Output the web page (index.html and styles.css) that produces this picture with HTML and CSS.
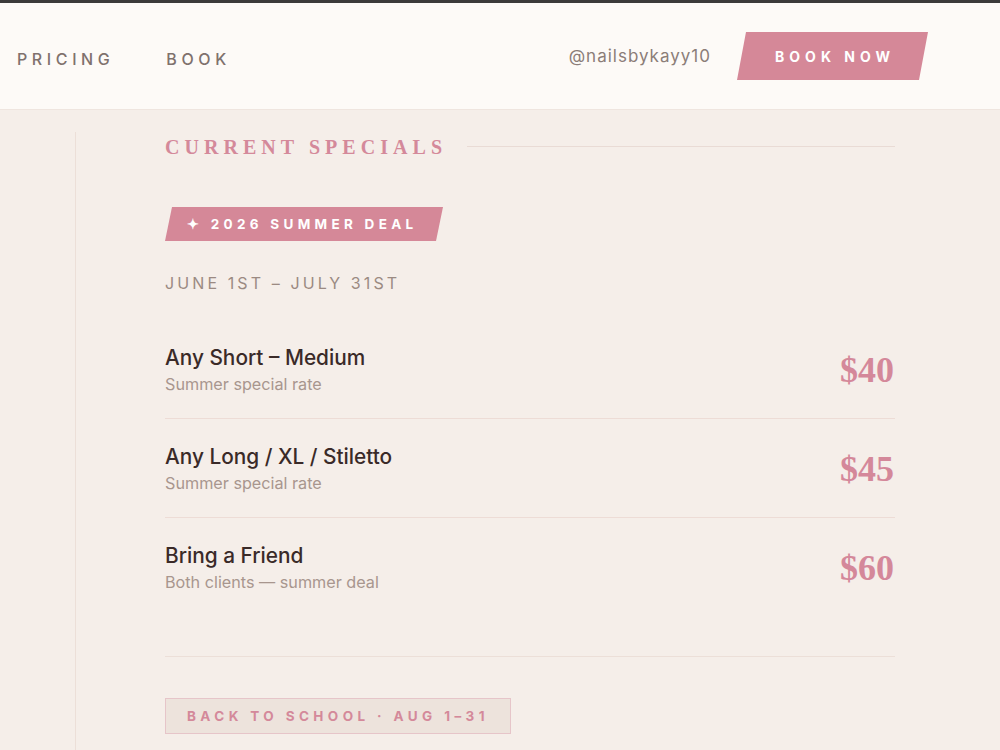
FILE: index.html
```html
<!DOCTYPE html>
<html lang="en">
<head>
<meta charset="utf-8">
<title>Nails by Kayy — Specials</title>
<link rel="stylesheet" href="styles.css">
</head>
<body>
<div class="topbar"></div>
<header class="site-header">
  <nav class="nav">
    <a class="nav-link" href="#pricing">PRICING</a>
    <a class="nav-link" href="#book">BOOK</a>
  </nav>
  <div class="header-right">
    <span class="handle">@nailsbykayy10</span>
    <a class="book-btn" href="#book"><span>BOOK NOW</span></a>
  </div>
</header>

<main class="page">
  <section class="specials">
    <div class="section-title">
      <h2>CURRENT SPECIALS</h2>
      <span class="title-rule"></span>
    </div>

    <div class="deal-badge"><span>✦ 2026 SUMMER DEAL</span></div>
    <p class="deal-dates">JUNE 1ST – JULY 31ST</p>

    <ul class="price-list">
      <li class="price-row">
        <div class="item">
          <span class="item-name">Any Short – Medium</span>
          <span class="item-note">Summer special rate</span>
        </div>
        <span class="price">$40</span>
      </li>
      <li class="price-row">
        <div class="item">
          <span class="item-name">Any Long / XL / Stiletto</span>
          <span class="item-note">Summer special rate</span>
        </div>
        <span class="price">$45</span>
      </li>
      <li class="price-row">
        <div class="item">
          <span class="item-name">Bring a Friend</span>
          <span class="item-note">Both clients — summer deal</span>
        </div>
        <span class="price">$60</span>
      </li>
    </ul>

    <div class="next-deal">
      <span class="next-tag">BACK TO SCHOOL · AUG 1–31</span>
    </div>
  </section>
</main>
</body>
</html>
```

FILE: styles.css
```css
* {
  box-sizing: border-box;
}

html, body {
  margin: 0;
  padding: 0;
}

body {
  background: #f5eee9;
  font-family: Inter, "Noto Sans", sans-serif;
  color: #3a2a28;
  height: 750px;
  overflow: hidden;
}

.topbar {
  height: 3px;
  background: #3c3b3a;
}

/* ---------- header ---------- */
.site-header {
  height: 107px;
  background: #fdfaf7;
  border-bottom: 1px solid #efe5df;
  display: flex;
  align-items: center;
  justify-content: space-between;
  padding: 0 72px 0 17px;
}

.nav {
  display: flex;
  gap: 52px;
  margin-top: 5px;
}

.nav-link {
  font-size: 16px;
  font-weight: 500;
  letter-spacing: 4.6px;
  color: #7f716d;
  text-decoration: none;
}

.header-right {
  display: flex;
  align-items: center;
  gap: 26px;
}

.handle {
  font-size: 17px;
  letter-spacing: 1px;
  color: #8b7d78;
}

.book-btn {
  display: flex;
  align-items: center;
  justify-content: center;
  width: 191px;
  height: 48px;
  background: #d58898;
  clip-path: polygon(9px 0, 100% 0, calc(100% - 9px) 100%, 0 100%);
  color: #fff;
  text-decoration: none;
  font-size: 14px;
  font-weight: 700;
  letter-spacing: 5px;
}

.book-btn span {
  margin-right: -5px;
}

/* ---------- page body ---------- */
.page {
  padding: 22px 0 0 75px;
}

.specials {
  border-left: 1px solid #ecdfd8;
  padding: 0 105px 40px 89px;
  min-height: 640px;
}

.section-title {
  display: flex;
  align-items: center;
  gap: 20px;
  padding-top: 4px;
}

.section-title h2 {
  margin: 0;
  font-family: "Liberation Serif", "DejaVu Serif", serif;
  font-weight: 700;
  font-size: 20px;
  line-height: 22px;
  letter-spacing: 5.05px;
  color: #d4899a;
}

.title-rule {
  flex: 1;
  height: 1px;
  background: #e9dbd5;
  margin-top: -2px;
}

.deal-badge {
  display: inline-flex;
  align-items: center;
  margin-top: 49px;
  height: 34px;
  width: 278px;
  padding-left: 22px;
  background: #d58898;
  clip-path: polygon(7px 0, 100% 0, calc(100% - 7px) 100%, 0 100%);
  color: #fff;
  font-size: 13.5px;
  font-weight: 700;
  letter-spacing: 4.3px;
}

.deal-dates {
  margin: 31px 0 0;
  font-size: 16px;
  line-height: 22px;
  letter-spacing: 3.1px;
  color: #9b8a82;
}

.price-list {
  list-style: none;
  margin: 26px 0 0;
  padding: 0;
}

.price-row {
  display: flex;
  align-items: center;
  justify-content: space-between;
  padding: 25px 0 23px;
  border-bottom: 1px solid #eddcd6;
}

.price-row:last-child {
  border-bottom: none;
}

.item {
  display: flex;
  flex-direction: column;
  gap: 2px;
}

.item-name {
  font-size: 20.8px;
  line-height: 26px;
  font-weight: 500;
  color: #3a2a28;
}

.item-note {
  font-size: 16.2px;
  line-height: 22px;
  color: #a8968e;
}

.price {
  font-family: "Liberation Serif", "DejaVu Serif", serif;
  font-weight: 700;
  font-size: 36px;
  color: #d4889a;
  margin-right: 1px;
}

.next-deal {
  margin-top: 40px;
  border-top: 1px solid #ecdfd8;
  padding-top: 41px;
}

.next-tag {
  display: inline-block;
  width: 346px;
  height: 36px;
  line-height: 34px;
  padding-left: 21px;
  background: #ede3dc;
  border: 1px solid #e6c5c9;
  color: #d4899a;
  font-size: 13.5px;
  font-weight: 700;
  letter-spacing: 4.4px;
}
```
